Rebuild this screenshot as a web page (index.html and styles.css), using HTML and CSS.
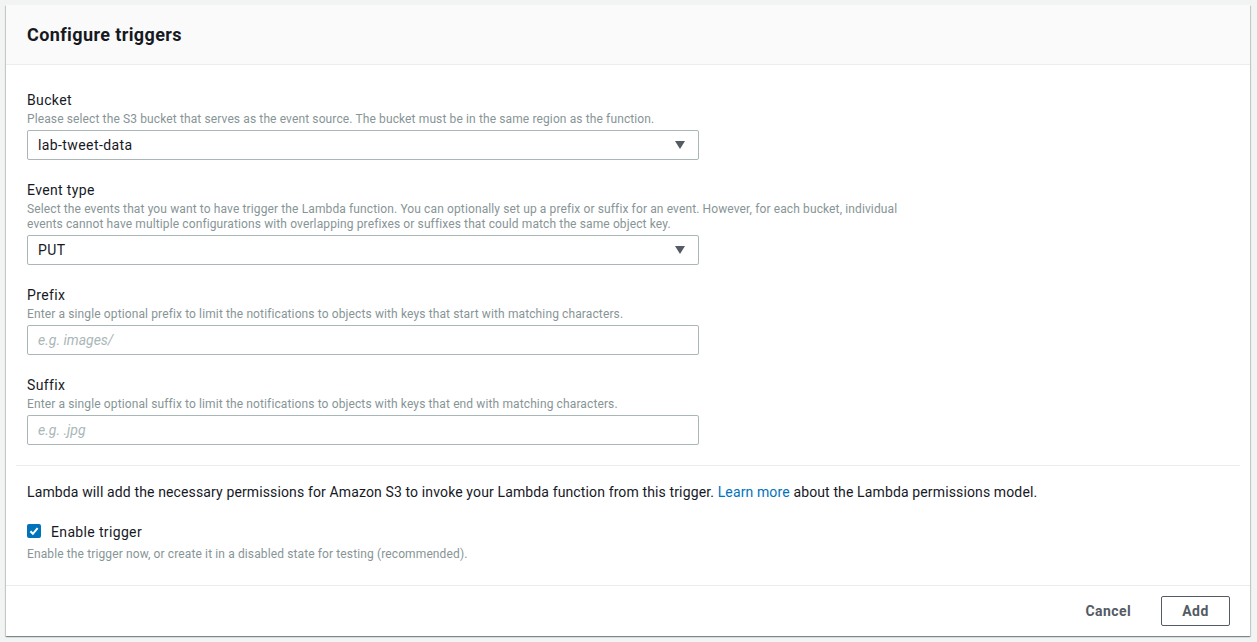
FILE: index.html
```html
<!DOCTYPE html>
<html lang="en">
<head>
<meta charset="utf-8">
<title>Configure triggers</title>
<link rel="stylesheet" href="styles.css">
</head>
<body>
<div class="page">
  <div class="card">
    <div class="card-header">
      <h2 class="title">Configure triggers</h2>
    </div>
    <div class="card-body">
      <div class="fields">
        <div class="field">
          <div class="label">Bucket</div>
          <div class="desc">Please select the S3 bucket that serves as the event source. The bucket must be in the same region as the function.</div>
          <div class="select">
            <span class="value">lab-tweet-data</span>
            <svg class="caret" width="10" height="8" viewBox="0 0 10 8"><path d="M0 0H10L5 8Z" fill="#545b64"/></svg>
          </div>
        </div>
        <div class="field">
          <div class="label">Event type</div>
          <div class="desc desc-wrap">Select the events that you want to have trigger the Lambda function. You can optionally set up a prefix or suffix for an event. However, for each bucket, individual events cannot have multiple configurations with overlapping prefixes or suffixes that could match the same object key.</div>
          <div class="select">
            <span class="value">PUT</span>
            <svg class="caret" width="10" height="8" viewBox="0 0 10 8"><path d="M0 0H10L5 8Z" fill="#545b64"/></svg>
          </div>
        </div>
        <div class="field">
          <div class="label">Prefix</div>
          <div class="desc">Enter a single optional prefix to limit the notifications to objects with keys that start with matching characters.</div>
          <div class="input"><span class="placeholder">e.g. images/</span></div>
        </div>
        <div class="field">
          <div class="label">Suffix</div>
          <div class="desc">Enter a single optional suffix to limit the notifications to objects with keys that end with matching characters.</div>
          <div class="input"><span class="placeholder">e.g. .jpg</span></div>
        </div>
      </div>
      <div class="permissions">
        <p class="perm-text">Lambda will add the necessary permissions for Amazon S3 to invoke your Lambda function from this trigger. <a class="link" href="#">Learn more</a> about the Lambda permissions model.</p>
        <div class="check-row">
          <span class="checkbox">
            <svg width="14" height="14" viewBox="0 0 14 14"><rect width="14" height="14" rx="2" fill="#0073bb"/><path d="M3.4 7.2 5.9 9.8 10.6 4.2" fill="none" stroke="#fff" stroke-width="2"/></svg>
          </span>
          <span class="check-label">Enable trigger</span>
        </div>
        <div class="desc check-desc">Enable the trigger now, or create it in a disabled state for testing (recommended).</div>
      </div>
    </div>
    <div class="card-footer">
      <button class="btn-link">Cancel</button>
      <button class="btn">Add</button>
    </div>
  </div>
</div>
</body>
</html>
```

FILE: styles.css
```css
* { box-sizing: border-box; }
html, body { margin: 0; padding: 0; }
body {
  background: #f2f3f3;
  font-family: Roboto, "Liberation Sans", Arial, sans-serif;
  color: #16191f;
  width: 1257px;
  height: 642px;
  overflow: hidden;
}
.page {
  padding: 5px 7px 0 6px;
}
.card {
  background: #fff;
  box-shadow: 0 1px 1px 0 rgba(0,28,36,.3), 1px 1px 1px 0 rgba(0,28,36,.15), -1px 1px 1px 0 rgba(0,28,36,.15);
}
.card-header {
  background: #fafafa;
  border-bottom: 1px solid #eaeded;
  height: 60px;
  display: flex;
  align-items: center;
  padding: 1px 21px 0 21px;
}
.title {
  margin: 0;
  font-size: 18px;
  font-weight: 700;
  line-height: 22px;
  letter-spacing: 0.4px;
  color: #16191f;
}
.card-body {
  padding: 24px 10px 0 10px;
}
.fields {
  padding: 0 11px 20px 11px;
  border-bottom: 1px solid #eaeded;
  display: flex;
  flex-direction: column;
  gap: 19px;
}
.field {
  display: flex;
  flex-direction: column;
}
.label {
  font-size: 14px;
  line-height: 18px;
  padding-top: 2px;
  letter-spacing: 0.35px;
  color: #16191f;
}
.desc {
  font-size: 12px;
  line-height: 15px;
  letter-spacing: 0.12px;
  padding-top: 3px;
  color: #879596;
}
.desc-wrap { max-width: 885px; }
.select, .input {
  margin-top: 3px;
  width: 672px;
  height: 30px;
  border: 1px solid #aab7b8;
  border-radius: 2px;
  display: flex;
  align-items: center;
  justify-content: space-between;
  padding: 0 9px 0 10px;
  font-size: 14px;
}
.value { letter-spacing: 0.4px; }
.caret { display: block; margin-right: 4px; }
.placeholder {
  color: #aab7b8;
  font-style: italic;
}
.permissions {
  padding: 16px 11px 23px 11px;
}
.perm-text {
  margin: 0;
  font-size: 14px;
  line-height: 20px;
  letter-spacing: 0.13px;
}
.link { color: #0073bb; text-decoration: none; }
.check-row {
  margin-top: 19px;
  display: flex;
  align-items: center;
  gap: 10px;
  height: 20px;
}
.checkbox svg { display: block; }
.check-label { font-size: 14px; line-height: 20px; letter-spacing: 0.35px; padding-top: 1px; }
.check-desc { margin-top: 3px; }
.card-footer {
  border-top: 1px solid #eaeded;
  height: 51px;
  display: flex;
  justify-content: flex-end;
  align-items: center;
  padding: 0 20px 1px 0;
  gap: 30px;
}
.btn-link, .btn {
  font-family: inherit;
  font-size: 14px;
  font-weight: 700;
  letter-spacing: 0.4px;
  background: none;
  color: #545b64;
  cursor: pointer;
}
.btn-link { border: none; padding: 0; }
.btn {
  border: 1px solid #545b64;
  border-radius: 2px;
  width: 69px;
  height: 30px;
  padding: 0;
}
```
